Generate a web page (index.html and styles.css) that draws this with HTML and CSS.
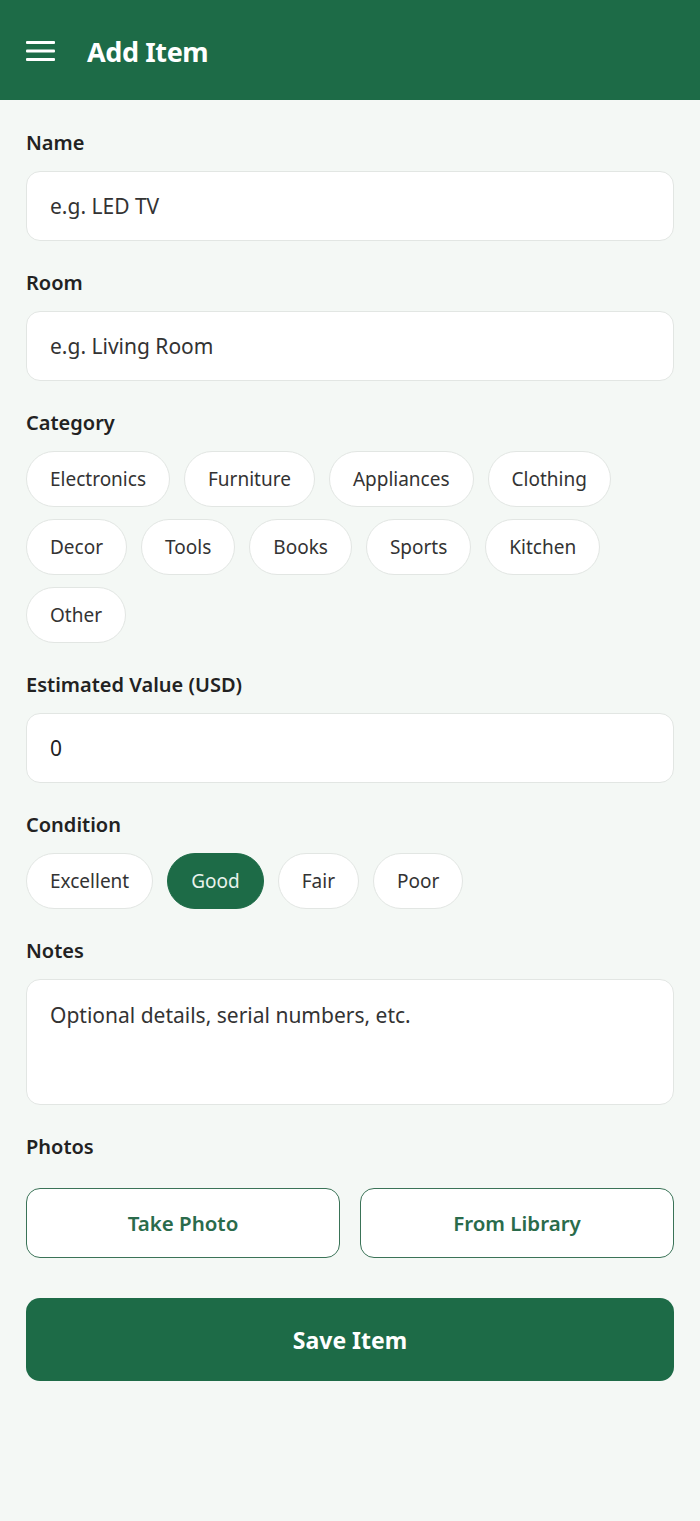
FILE: index.html
```html
<!DOCTYPE html>
<html lang="en">
<head>
  <meta charset="UTF-8" />
  <meta name="viewport" content="width=device-width, initial-scale=1.0"/>
  <title>Add Item</title>
  <link rel="stylesheet" href="styles.css">
</head>
<body>
  <header class="barra">
    <button class="menu" aria-label="Menu">
      <svg width="30" height="22" viewBox="0 0 30 22">
        <rect x="0" y="1" width="29" height="3" rx="1" fill="#fff"/>
        <rect x="0" y="9.5" width="29" height="3" rx="1" fill="#fff"/>
        <rect x="0" y="18" width="29" height="3" rx="1" fill="#fff"/>
      </svg>
    </button>
    <h1 class="titulo">Add Item</h1>
  </header>

  <main class="formulario">
    <div class="campo">
      <label class="etiqueta">Name</label>
      <input type="text" class="entrada" placeholder="e.g. LED TV" />
    </div>

    <div class="campo">
      <label class="etiqueta">Room</label>
      <input type="text" class="entrada" placeholder="e.g. Living Room" />
    </div>

    <div class="campo">
      <label class="etiqueta">Category</label>
      <div class="chips">
        <button class="chip">Electronics</button>
        <button class="chip">Furniture</button>
        <button class="chip">Appliances</button>
        <button class="chip">Clothing</button>
        <button class="chip">Decor</button>
        <button class="chip">Tools</button>
        <button class="chip">Books</button>
        <button class="chip">Sports</button>
        <button class="chip">Kitchen</button>
        <button class="chip">Other</button>
      </div>
    </div>

    <div class="campo">
      <label class="etiqueta">Estimated Value (USD)</label>
      <input type="text" class="entrada" value="0" />
    </div>

    <div class="campo">
      <label class="etiqueta">Condition</label>
      <div class="chips">
        <button class="chip">Excellent</button>
        <button class="chip activo">Good</button>
        <button class="chip">Fair</button>
        <button class="chip">Poor</button>
      </div>
    </div>

    <div class="campo">
      <label class="etiqueta">Notes</label>
      <textarea class="entrada notas" placeholder="Optional details, serial numbers, etc."></textarea>
    </div>

    <div class="campo">
      <label class="etiqueta">Photos</label>
      <div class="fotos">
        <button class="boton-borde">Take Photo</button>
        <button class="boton-borde">From Library</button>
      </div>
    </div>

    <button class="guardar">Save Item</button>
  </main>
</body>
</html>
```

FILE: styles.css
```css
body {
  margin: 0;
  font-family: 'Noto Sans', 'Open Sans', sans-serif;
  background-color: #f4f8f5;
  color: #222;
  min-height: 100vh;
}

.barra {
  height: 100px;
  background-color: #1d6b47;
  display: flex;
  align-items: center;
  padding: 2px 26px 0;
  box-sizing: border-box;
  gap: 31px;
}

.menu {
  background: none;
  border: none;
  padding: 0;
  display: flex;
  cursor: pointer;
}

.titulo {
  margin: 0;
  color: #fff;
  font-size: 27px;
  font-weight: bold;
  letter-spacing: -0.4px;
}

.formulario {
  padding: 32px 26px 0;
  display: flex;
  flex-direction: column;
  gap: 31px;
}

.campo {
  display: flex;
  flex-direction: column;
  gap: 17px;
}

.etiqueta {
  font-size: 20px;
  font-weight: 600;
  color: #222;
  line-height: 22px;
}

.entrada {
  height: 70px;
  box-sizing: border-box;
  border: 1px solid #e2e6e3;
  border-radius: 14px;
  background: #fff;
  padding: 0 23px;
  font-family: inherit;
  font-size: 21px;
  color: #222;
  outline: none;
}

.entrada::placeholder {
  color: #333;
}

.notas {
  height: 126px;
  padding-top: 21px;
  resize: none;
}

.chips {
  display: flex;
  flex-wrap: wrap;
  gap: 12px 14px;
}

.chip {
  height: 56px;
  padding: 0 23px;
  border: 1px solid #e2e6e3;
  border-radius: 28px;
  background: #fff;
  font-family: inherit;
  font-size: 19px;
  color: #333;
  cursor: pointer;
}

.chip.activo {
  background-color: #1d6b47;
  border-color: #1d6b47;
  color: #e8f3ec;
}

.fotos {
  display: grid;
  grid-template-columns: 1fr 1fr;
  gap: 20px;
  margin-top: 13px;
}

.boton-borde {
  height: 70px;
  border: 1.5px solid #3a7357;
  border-radius: 14px;
  background: #fff;
  font-family: inherit;
  font-size: 20.5px;
  font-weight: 600;
  color: #2a6b4b;
  cursor: pointer;
}

.guardar {
  height: 83px;
  margin-top: 9px;
  border: none;
  border-radius: 14px;
  background-color: #1d6b47;
  color: #fff;
  font-family: inherit;
  font-size: 23px;
  font-weight: bold;
  cursor: pointer;
}
```
